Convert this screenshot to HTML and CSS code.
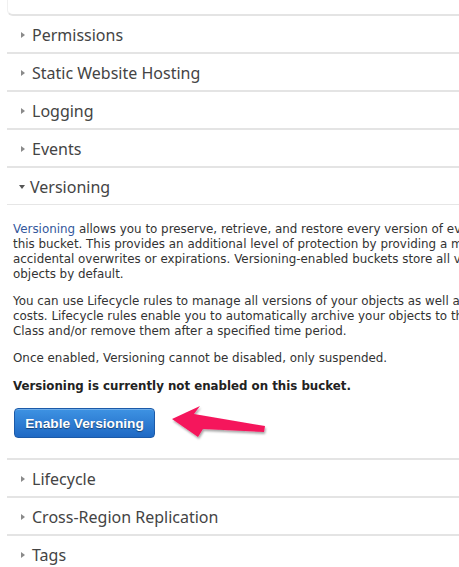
FILE: index.html
```html
<!DOCTYPE html>
<html>
<head>
<meta charset="utf-8">
<link rel="stylesheet" href="styles.css">
</head>
<body>
<div class="page">
  <div class="prev-panel"></div>
  <div class="row"><span class="caret right"></span>Permissions</div>
  <div class="row"><span class="caret right"></span>Static Website Hosting</div>
  <div class="row"><span class="caret right"></span>Logging</div>
  <div class="row"><span class="caret right"></span>Events</div>
  <div class="row open"><span class="caret down"></span>Versioning</div>
  <div class="content">
    <p><a class="link">Versioning</a> allows you to preserve, retrieve, and restore every version of every object stored in<br>this bucket. This provides an additional level of protection by providing a means of recovery for<br>accidental overwrites or expirations. Versioning-enabled buckets store all versions of your<br>objects by default.</p>
    <p>You can use Lifecycle rules to manage all versions of your objects as well as their associated<br>costs. Lifecycle rules enable you to automatically archive your objects to the Glacier Storage<br>Class and/or remove them after a specified time period.</p>
    <p>Once enabled, Versioning cannot be disabled, only suspended.</p>
    <p class="status">Versioning is currently not enabled on this bucket.</p>
    <button class="btn">Enable Versioning</button>
    <svg class="pointer" width="110" height="50" viewBox="0 0 110 50">
      <defs>
        <filter id="sh" x="-20%" y="-30%" width="140%" height="160%">
          <feDropShadow dx="1" dy="2" stdDeviation="1.2" flood-color="#000" flood-opacity="0.35"/>
        </filter>
      </defs>
      <polygon filter="url(#sh)" fill="#f5165c" points="4,16 32,3 26,11 97,23 96,29 35,26 30,34"/>
    </svg>
  </div>
  <div class="row"><span class="caret right"></span>Lifecycle</div>
  <div class="row"><span class="caret right"></span>Cross-Region Replication</div>
  <div class="row"><span class="caret right"></span>Tags</div>
</div>
</body>
</html>
```
FILE: styles.css
```css
html, body {
  margin: 0;
  padding: 0;
  background: #fff;
  overflow: hidden;
}
.page {
  margin-left: 7px;
  width: 760px;
}
.prev-panel {
  box-sizing: border-box;
  height: 16px;
  border-bottom: 2px solid #e4e4e4;
  border-left: 1px solid #f0f0f0;
  border-bottom-left-radius: 6px;
}
.row {
  height: 35px;
  padding-top: 1px;
  display: flex;
  align-items: center;
  padding-left: 14px;
  border-bottom: 2px solid #e4e4e4;
  font-family: "Noto Sans", "Open Sans", sans-serif;
  font-size: 16px;
  color: #444;
}
.row.open {
  border-bottom: 1px solid #e6e6e6;
}
.caret {
  width: 0;
  height: 0;
}
.caret.right {
  border-top: 3.5px solid transparent;
  border-bottom: 3.5px solid transparent;
  border-left: 4px solid #8a8a8a;
  margin-right: 7px;
}
.caret.down {
  border-left: 3.5px solid transparent;
  border-right: 3.5px solid transparent;
  border-top: 4px solid #555;
  margin-left: -2px;
  margin-right: 5px;
}
.content {
  position: relative;
  padding: 17px 0 20px 6px;
  border-bottom: 2px solid #e4e4e4;
  font-family: "DejaVu Sans", Verdana, sans-serif;
  font-size: 11.9px;
  line-height: 15px;
  color: #333;
}
.content p {
  margin: 0 0 12px 0;
  white-space: nowrap;
}
.content p + p + p {
  margin-bottom: 13px;
}
.link {
  color: #34589c;
}
.content p.status {
  font-weight: bold;
  font-size: 11.8px;
  color: #222;
  margin-bottom: 14px;
}
.btn {
  display: block;
  margin-left: 1px;
  width: 141px;
  height: 30px;
  padding: 0;
  border: 1px solid #1c5aa8;
  border-radius: 4px;
  background: linear-gradient(#3e93e3, #1f69c4);
  color: #fff;
  font-family: "Liberation Sans", Arial, sans-serif;
  font-weight: bold;
  font-size: 13.7px;
  text-shadow: 0 1px 1px rgba(0,0,0,0.45);
  box-shadow: inset 0 1px 0 rgba(255,255,255,0.25);
}
.pointer {
  position: absolute;
  left: 161px;
  top: 198px;
}
```
